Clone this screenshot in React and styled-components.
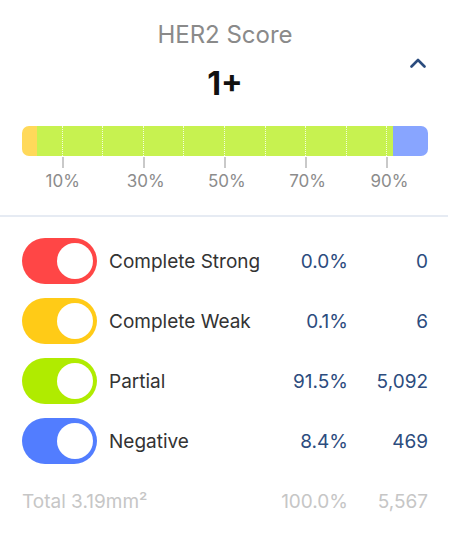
import React from 'react';
import styled, { createGlobalStyle } from 'styled-components';

const Global = createGlobalStyle`
    body {
        margin: 0;
        background: #ffffff;
        font-family: "Inter", "Noto Sans", sans-serif;
    }
`;

const Page = styled.div`
    width: 450px;
    height: 540px;
    background: #ffffff;
    display: flex;
    flex-direction: column;
`;

const Header = styled.div`
    display: grid;
    grid-template-columns: 1fr auto 1fr;
    padding: 20px 22px 0;
`;

const Title = styled.div`
    grid-column: 2;
    grid-row: 1;
    font-size: 24px;
    color: #8a8a8a;
    text-align: center;
    line-height: 29px;
`;

const Score = styled.div`
    grid-column: 2;
    grid-row: 2;
    font-size: 32px;
    font-weight: 700;
    color: #111111;
    text-align: center;
    margin-top: 16px;
    line-height: 38px;
`;

const Toggle = styled.button`
    grid-column: 3;
    grid-row: 1 / 3;
    justify-self: end;
    align-self: start;
    margin-top: 38px;
    margin-right: 2px;
    border: 0;
    padding: 0;
    background: none;
    cursor: pointer;
    display: flex;
`;

const Chart = styled.div`
    padding: 0 22px;
    margin-top: 23px;
`;

const Bar = styled.div`
    display: flex;
    height: 30px;
    border-radius: 7px;
    overflow: hidden;
    position: relative;
`;

const Segment = styled.div`
    background: ${p => p.$color};
    height: 100%;
`;

const Grid = styled.div`
    position: absolute;
    inset: 0;
    display: grid;
    grid-template-columns: repeat(10, 1fr);
    pointer-events: none;
`;

const GridCell = styled.div`
    border-right: 1px dotted rgba(255, 255, 255, 0.8);
    &:last-child { border-right: 0; }
`;

const Axis = styled.div`
    display: grid;
    grid-template-columns: repeat(10, 1fr);
    height: 59px;
`;

const TickSlot = styled.div`
    display: flex;
    flex-direction: column;
    align-items: flex-end;
`;

const TickMark = styled.div`
    width: 2px;
    height: 11px;
    margin-right: -1px;
    margin-top: 1px;
    background: #c9c9c9;
`;

const TickLabel = styled.div`
    font-size: 17px;
    color: #8c8c8c;
    line-height: 20px;
    margin-top: 3px;
    margin-right: -17px;
    width: 34px;
    text-align: center;
`;

const Divider = styled.div`
    height: 2px;
    background: #e6ebf3;
    margin: 0 2px 0 0;
`;

const Rows = styled.div`
    padding: 14px 22px 0;
    display: flex;
    flex-direction: column;
`;

const Row = styled.div`
    display: grid;
    grid-template-columns: 75px 1fr 80px 80px;
    align-items: center;
    height: 60px;
    color: ${p => (p.$muted ? '#c6c6c6' : '#2c4c7e')};
    font-size: 19px;
`;

const Switch = styled.div`
    width: 75px;
    height: 46px;
    border-radius: 23px;
    background: ${p => p.$color};
    display: flex;
    align-items: center;
    justify-content: flex-end;
    padding-right: 4px;
    box-sizing: border-box;
`;

const Knob = styled.div`
    width: 36px;
    height: 36px;
    border-radius: 50%;
    background: #ffffff;
`;

const Label = styled.div`
    color: ${p => (p.$muted ? '#c6c6c6' : '#333333')};
    font-size: 19px;
    padding-left: ${p => (p.$muted ? '0' : '12px')};
    grid-column: ${p => (p.$muted ? '1 / 3' : 'auto')};
`;

const Num = styled.div`
    text-align: right;
`;

const rows = [
    { name: 'Complete Strong', color: '#ff4646', pct: '0.0%', n: '0' },
    { name: 'Complete Weak', color: '#ffcb17', pct: '0.1%', n: '6' },
    { name: 'Partial', color: '#b0eb00', pct: '91.5%', n: '5,092' },
    { name: 'Negative', color: '#527dff', pct: '8.4%', n: '469' },
];

const segments = [
    { w: 3.8, color: '#ffd95a' },
    { w: 87.7, color: '#c7f250' },
    { w: 8.5, color: '#88a5ff' },
];

export default function App() {
    return (
        <Page>
            <Global />
            <Header>
                <Title>HER2 Score</Title>
                <Score>1+</Score>
                <Toggle aria-label="collapse">
                    <svg width="16" height="10" viewBox="0 0 16 10">
                        <path d="M1.5 8.5 L8 2 L14.5 8.5" fill="none" stroke="#2b4c7e" strokeWidth="2.6" strokeLinecap="round" strokeLinejoin="round" />
                    </svg>
                </Toggle>
            </Header>
            <Chart>
                <Bar>
                    {segments.map((s, i) => (
                        <Segment key={i} $color={s.color} style={{ width: `${s.w}%` }} />
                    ))}
                    <Grid>
                        {Array.from({ length: 10 }).map((_, i) => <GridCell key={i} />)}
                    </Grid>
                </Bar>
                <Axis>
                    {Array.from({ length: 10 }).map((_, i) => (
                        <TickSlot key={i}>
                            {i % 2 === 0 && i < 9 && (
                                <>
                                    <TickMark />
                                    <TickLabel>{(i + 1) * 10}%</TickLabel>
                                </>
                            )}
                        </TickSlot>
                    ))}
                </Axis>
            </Chart>
            <Divider />
            <Rows>
                {rows.map(r => (
                    <Row key={r.name}>
                        <Switch $color={r.color}><Knob /></Switch>
                        <Label>{r.name}</Label>
                        <Num>{r.pct}</Num>
                        <Num>{r.n}</Num>
                    </Row>
                ))}
                <Row $muted>
                    <Label $muted>Total 3.19mm²</Label>
                    <Num>100.0%</Num>
                    <Num>5,567</Num>
                </Row>
            </Rows>
        </Page>
    );
}
